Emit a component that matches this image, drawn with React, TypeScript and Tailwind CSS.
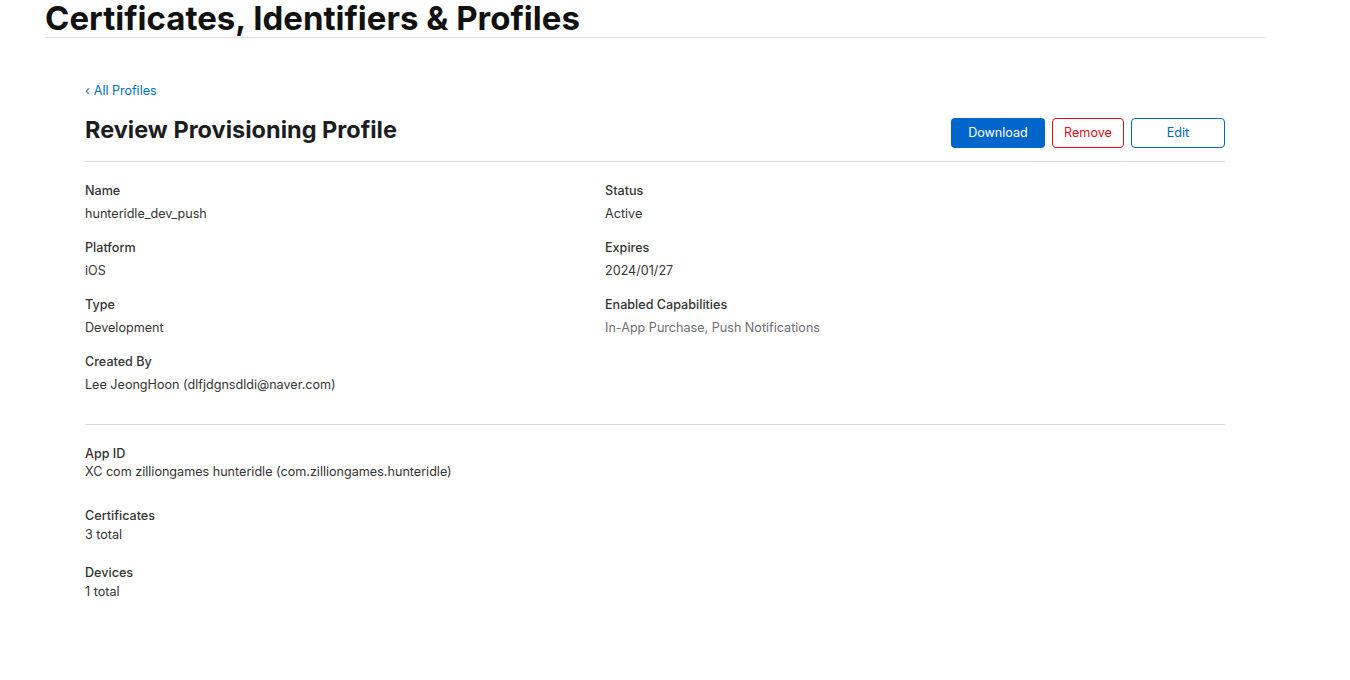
import React from 'react'

const font = { fontFamily: 'Inter, "Noto Sans", sans-serif' }

function Field({ label, value, muted }: { label: string; value: string; muted?: boolean }) {
  return (
    <div className="h-[57px]">
      <div className="text-[12.6px] leading-[16px] font-medium text-[#333]">{label}</div>
      <div className={`mt-[7px] text-[12.6px] leading-[16px] ${muted ? 'text-[#6e6e73]' : 'text-[#333]'}`}>
        {value}
      </div>
    </div>
  )
}

function Block({ label, value, className, gap = 'mt-[3px]' }: { label: string; value: string; className?: string; gap?: string }) {
  return (
    <div className={className}>
      <div className="text-[12.6px] leading-[16px] font-medium text-[#333]">{label}</div>
      <div className={`${gap} text-[12.6px] leading-[16px] text-[#333]`}>{value}</div>
    </div>
  )
}

export default function App() {
  return (
    <div className="min-h-[680px] bg-white" style={font}>
      <div className="ml-[45px] w-[1220px]">
        <h1 className="text-[33px] leading-[35px] font-bold text-[#111] pt-px pb-px">
          Certificates, Identifiers &amp; Profiles
        </h1>
        <div className="h-px bg-[#e0e0e0]" />
      </div>

      <div className="ml-[85px] w-[1140px] pt-[45px]">
        <a className="text-[12.5px] leading-[16px] text-[#0070c9] flex items-center gap-[4px]" href="#">
          <span>‹</span>
          <span>All Profiles</span>
        </a>

        <div className="mt-[19px] flex items-center justify-between pb-[13px] border-b border-[#d6d6d6]">
          <h2 className="text-[23.5px] leading-[30px] font-bold text-[#1d1d1f] -mt-[6px]">Review Provisioning Profile</h2>
          <div className="flex gap-[7px]">
            <button className="w-[94px] h-[30px] rounded-[4px] bg-[#0066cc] text-white text-[12.6px]">Download</button>
            <button className="w-[72px] h-[30px] rounded-[4px] border border-[#e30b17] text-[#e30b17] text-[12.6px]">Remove</button>
            <button className="w-[94px] h-[30px] rounded-[4px] border border-[#0066cc] text-[#0066cc] text-[12.6px]">Edit</button>
          </div>
        </div>

        <div className="grid grid-cols-[520px_1fr] pt-[21px] pb-[13px] border-b border-[#d6d6d6]">
          <div>
            <Field label="Name" value="hunteridle_dev_push" />
            <Field label="Platform" value="iOS" />
            <Field label="Type" value="Development" />
            <Field label="Created By" value="Lee JeongHoon (dlfjdgnsdldi@naver.com)" />
          </div>
          <div>
            <Field label="Status" value="Active" />
            <Field label="Expires" value="2024/01/27" />
            <Field label="Enabled Capabilities" value="In-App Purchase, Push Notifications" muted />
          </div>
        </div>

        <div className="pt-[21px] flex flex-col">
          <Block gap="mt-[2px]" label="App ID" value="XC com zilliongames hunteridle (com.zilliongames.hunteridle)" />
          <Block className="mt-[28px]" label="Certificates" value="3 total" />
          <Block className="mt-[22px]" label="Devices" value="1 total" />
        </div>
      </div>
    </div>
  )
}
